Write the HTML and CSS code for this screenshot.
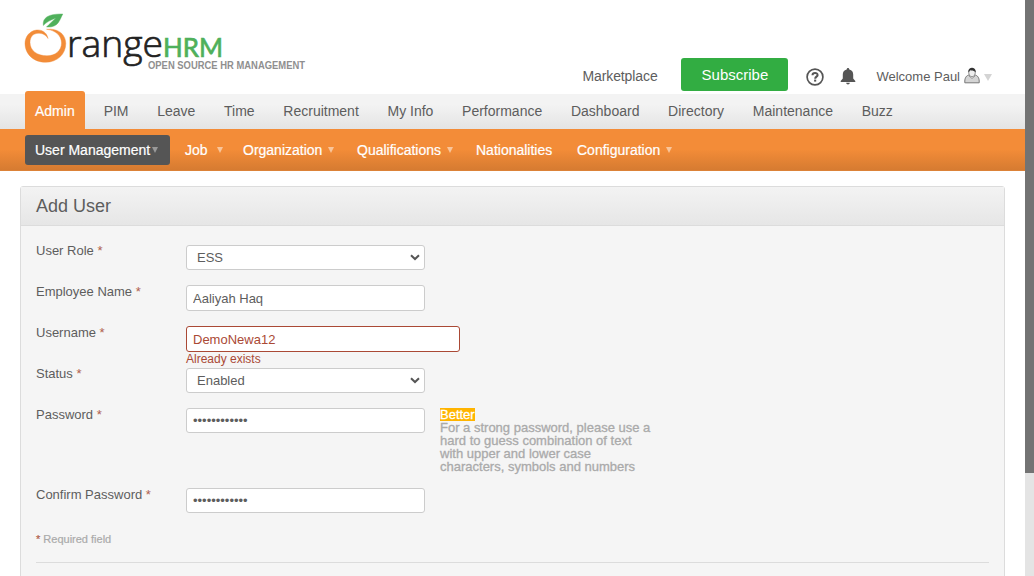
FILE: index.html
```html
<!DOCTYPE html>
<html lang="en">
<head>
<meta charset="utf-8">
<title>OrangeHRM</title>
<link rel="stylesheet" href="styles.css">
</head>
<body>
<div class="page">
  <header class="top">
    <svg class="logo" width="290" height="74" viewBox="20 5 290 74">
      <path d="M48 38.500C47 32.500 42 29.500 36.500 30C29.500 30.800 25 37 25 43.500C25 54.500 34 62.300 45.500 62.300C57.500 62.300 65.800 54 65.800 43.500C65.800 34.500 58.500 28 46.500 29.300C56 30.300 61.500 36 61.500 43C61.500 50.500 55.500 55.800 47 55.800C37 55.800 30 50.500 30 42.500C30 37 33 33.500 38 33.300C42 33 45.500 34.500 48 38.500Z" fill="#f28c38" stroke="#f28c38" stroke-width=".4"/>
      <path d="M43.300 25.500C42.500 18 47.500 13.800 62.800 14C59.500 20 58.500 28 46.500 27C50 23.500 53 20.500 56 18C51 19.800 46.500 22 43.300 25.500Z" fill="#4fb05b" stroke="#4fb05b" stroke-width=".4"/>
      <text class="logo-name" x="67" y="57" textLength="96" lengthAdjust="spacingAndGlyphs">range</text>
      <text class="logo-hrm" x="163" y="56.500" textLength="60" lengthAdjust="spacingAndGlyphs">HRM</text>
      <text class="logo-tag" x="148" y="69" textLength="157" lengthAdjust="spacingAndGlyphs">OPEN SOURCE HR MANAGEMENT</text>
    </svg>
    <div class="tools">
      <a class="market">Marketplace</a>
      <a class="subscribe">Subscribe</a>
      <svg class="help" width="18" height="18" viewBox="0 0 18 18">
        <circle cx="9" cy="9" r="7.900" fill="none" stroke="#555" stroke-width="1.700"/>
        <path d="M6.500 7.200C6.500 4.200 11.700 4.200 11.600 7.100C11.500 8.700 9.200 8.700 9.200 10.700" fill="none" stroke="#555" stroke-width="2"/>
        <rect x="8.100" y="11.600" width="2.100" height="2" fill="#555"/>
      </svg>
      <svg class="bell" width="16" height="17" viewBox="0 0 16 17">
        <path d="M8 0C8.900 0 9.300.7 9.300 1.500C12 2.100 13.200 4.200 13.200 6.500V10.500L15.300 13V14H.7V13L2.800 10.500V6.500C2.800 4.200 4 2.100 6.700 1.500C6.700.7 7.100 0 8 0ZM6.200 14.800H9.800C9.800 17.100 6.200 17.100 6.200 14.800Z" fill="#555"/>
      </svg>
      <a class="welcome">Welcome Paul</a>
      <svg class="person" width="16" height="17" viewBox="0 0 16 17">
        <path d="M.8 15.800V14C.8 11 2.500 8 5.500 8H10.500C13.500 8 15.200 11 15.200 14V15.800Z" fill="#d4d4d4" stroke="#777"/>
        <path d="M5 9L8 11.500L11 9" fill="#eee" stroke="#888" stroke-width=".8"/>
        <ellipse cx="8" cy="5.800" rx="3.300" ry="4" fill="#eee" stroke="#777" stroke-width=".8"/>
        <path d="M4.300 5.500C3.300-.8 12.700-.8 11.700 5.500C10.500 2.800 7.500 4.300 6.500 3.200C5.500 3.500 5 4.500 4.300 5.500Z" fill="#333"/>
      </svg>
      <span class="caret caret-user"></span>
    </div>
  </header>
  <nav class="menu">
    <a class="tab active">Admin</a><a class="tab">PIM</a><a class="tab">Leave</a><a class="tab">Time</a><a class="tab">Recruitment</a><a class="tab">My Info</a><a class="tab">Performance</a><a class="tab">Dashboard</a><a class="tab">Directory</a><a class="tab">Maintenance</a><a class="tab">Buzz</a>
  </nav>
  <nav class="submenu">
    <a class="sub current">User Management<span class="caret"></span></a>
    <a class="sub job">Job<span class="caret"></span></a>
    <a class="sub org">Organization<span class="caret"></span></a>
    <a class="sub qual">Qualifications<span class="caret"></span></a>
    <a class="sub nat">Nationalities</a>
    <a class="sub">Configuration<span class="caret"></span></a>
  </nav>
  <main class="box">
    <h1 class="head">Add User</h1>
    <form class="form">
      <div class="row"><label class="label">User Role <em>*</em></label><div class="field pick"><select class="control select"><option>ESS</option></select><svg class="chevron" width="10" height="7" viewBox="0 0 10 7"><path d="M1 1.200L5 5L9 1.200" fill="none" stroke="#555" stroke-width="2"/></svg></div></div>
      <div class="row"><label class="label">Employee Name <em>*</em></label><div class="field"><input class="control" value="Aaliyah Haq"></div></div>
      <div class="row"><label class="label">Username <em>*</em></label><div class="field"><input class="control invalid" value="DemoNewa12"><span class="error">Already exists</span></div></div>
      <div class="row"><label class="label">Status <em>*</em></label><div class="field pick"><select class="control select"><option>Enabled</option></select><svg class="chevron" width="10" height="7" viewBox="0 0 10 7"><path d="M1 1.200L5 5L9 1.200" fill="none" stroke="#555" stroke-width="2"/></svg></div></div>
      <div class="row tall"><label class="label">Password <em>*</em></label><div class="field"><input class="control secret" value="••••••••••••"></div><div class="hint"><span class="strength">Better</span><br>For a strong password, please use a hard to guess combination of text with upper and lower case characters, symbols and numbers</div></div>
      <div class="row"><label class="label">Confirm Password <em>*</em></label><div class="field"><input class="control secret" value="••••••••••••"></div></div>
      <p class="required"><em>*</em> Required field</p>
    </form>
  </main>
</div>
<div class="scrollbar"><div class="thumb"></div></div>
</body>
</html>
```
FILE: styles.css
```css
* { box-sizing: border-box; }
body {
  margin: 0;
  height: 576px;
  overflow: hidden;
  display: flex;
  background: #fff;
  color: #5d5d5d;
  font: 13px "Liberation Sans", Arial, sans-serif;
}
.page { width: 1025px; height: 576px; overflow: hidden; }
.scrollbar { width: 9px; background: #e4e4e4; }
.thumb { height: 473px; background: #737373; }
em { font-style: normal; color: #b0604c; }

.top { height: 94px; display: flex; justify-content: space-between; padding: 5px 33px 0 20px; }
.logo { display: block; overflow: visible; }
.logo-name { font: 300 37px "Open Sans", sans-serif; fill: #222; stroke: #222; stroke-width: .7px; }
.logo-hrm { font: 27.5px Lato, sans-serif; fill: #4fb05b; stroke: #4fb05b; stroke-width: .7px; }
.logo-tag { font: bold 10px "Liberation Sans", sans-serif; fill: #8f8f8f; }
.tools { display: flex; align-items: center; height: 33px; margin: 53px -1px 0 0; }
.market { font-size: 14px; width: 98px; margin-right: 1px; padding-top: 3px; letter-spacing: -.1px; }
.subscribe { width: 107px; height: 33px; line-height: 33px; border-radius: 3px; background: #32ad42; color: #fff; font-size: 15px; text-align: center; }
.help { margin: 4px 0 0 18px; }
.bell { margin: 4px 0 0 16px; }
.welcome { margin: 3px 4px 0 20px; }
.person { margin-top: 2px; }
.caret { display: inline-block; border: solid transparent; border-width: 6px 3px 0; border-top-color: #f9c59a; }
.caret-user { border-width: 7px 4px 0; border-top-color: #d4d4d4; margin: 6px 1px 0 4px; }

.menu { height: 35px; display: flex; align-items: flex-end; padding-left: 25px; background: linear-gradient(#f3f3f3 30%, #e4e4e4); }
.tab { height: 35px; line-height: 34px; padding: 0 9.570px; margin-left: 9.570px; font-size: 14px; white-space: nowrap; }
.tab.active { height: 38px; line-height: 40px; width: 60px; padding: 0 10px; margin: 0 -.5px 0 0; background: #f38c38; color: #fff; border-radius: 3px 3px 0 0; }
.tab.active { -webkit-text-stroke: .2px #fff; }

.submenu { height: 42px; display: flex; align-items: center; padding-left: 25px; background: linear-gradient(#f38c38 50%, #d67b31); border-bottom: 1px solid #dc8238; color: #fff; font-size: 14px; -webkit-text-stroke: .2px #fff; }
.sub { display: flex; align-items: center; white-space: nowrap; gap: 6px; }
.current { width: 145px; height: 30px; margin-right: 15px; padding-left: 10px; border-radius: 3px; background: #555; gap: 2px; }
.current .caret { border-top-color: #999; }
.job { width: 58px; gap: 9px; }
.org { width: 114px; }
.qual { width: 119px; }
.nat { width: 101px; }

.box { width: 985px; height: 420px; margin: 15px 0 0 20px; border: 1px solid #dcdcdc; border-radius: 3px; background: #f5f5f5; }
.head { height: 39px; margin: 0; padding-left: 15px; border-bottom: 1px solid #dcdcdc; background: linear-gradient(#f3f3f3, #e6e6e6); font-size: 18px; font-weight: normal; line-height: 38px; }
.form { padding: 15px 15px 0; }
.row { height: 41px; display: flex; }
.row.tall { height: 80px; }
.label { width: 150px; padding-top: 2px; line-height: 16px; }
.field { width: 254px; padding-top: 3px; }
.pick { display: grid; padding-top: 4px; align-items: center; align-content: start; }
.pick > * { grid-area: 1 / 1; }
.chevron { margin-left: 224px; }
.control { display: block; width: 239px; height: 26px; margin: 0; padding: 0 6px; border: 1px solid #ccc; border-radius: 3px; background: #fff; color: #5d5d5d; font: 13px "Liberation Sans", Arial, sans-serif; }
.select { height: 25px; padding-left: 10px; appearance: none; }
.secret { height: 25px; }
.invalid { width: 274px; border-color: #aa4935; color: #aa4935; }
.error { display: block; color: #aa4935; font-size: 12px; line-height: 12px; padding-top: 1px; }
.hint { width: 215px; padding-top: 3px; line-height: 13px; color: #aaa; -webkit-text-stroke: .3px #aaa; }
.strength { display: inline-block; height: 13px; background: #ffb400; color: #fff; -webkit-text-stroke-color: #fff; }
.required { margin: 0; height: 37px; padding-top: 6px; font-size: 11px; line-height: 14px; color: #aaa; border-bottom: 1px solid #dcdcdc; -webkit-text-stroke: .2px; }
```
